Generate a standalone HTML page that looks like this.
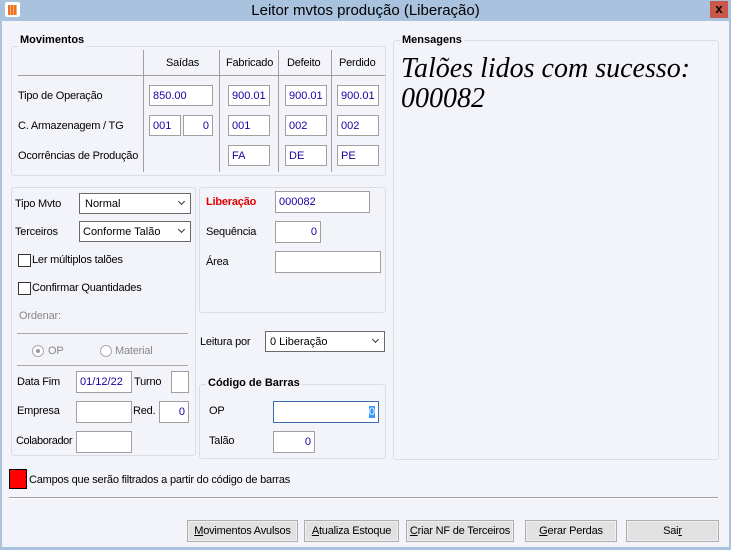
<!DOCTYPE html>
<html><head><meta charset="utf-8"><style>
*{box-sizing:border-box;margin:0;padding:0}
body{width:731px;height:550px;position:relative;overflow:hidden;background:#a9c2dd;font-family:"Liberation Sans",sans-serif;font-size:11px;color:#000}
.a{position:absolute}
#main{left:2px;top:21px;width:727px;height:526px;background:#f3f4f9}
.t{position:absolute;white-space:nowrap;font-size:11px;line-height:13px;letter-spacing:-0.2px}
.gb{position:absolute;border:1px solid #dcdde3;border-radius:3px}
.gl{position:absolute;background:#f3f4f9;font-weight:bold;font-size:11px;line-height:13px;padding:0 2px}
.in{position:absolute;background:#fff;border:1px solid #a0a0a0;color:#1a00a0;font-size:11px;padding:0 3px;white-space:nowrap;display:flex;align-items:center}
.r{justify-content:flex-end}
.vl{position:absolute;width:1px;background:#a0a0a0}
.hl{position:absolute;height:1px;background:#a0a0a0}
.sel{position:absolute;background:#fff;border:1px solid #6a6a6a;font-size:11px;padding:0 5px;display:flex;align-items:center}
.sel:after{content:"";position:absolute;right:6px;top:5px;width:4px;height:4px;border-right:1.5px solid #333;border-bottom:1.5px solid #333;transform:rotate(45deg)}
.cb{position:absolute;width:13px;height:13px;border:1px solid #333;background:#fff}
.btn{position:absolute;top:520px;height:22px;background:#e1e1e1;border:1px solid #adadad;box-shadow:inset 0 0 0 1px #f0f0f0;text-align:center;line-height:20px;font-size:11px;letter-spacing:-0.2px}
</style></head><body>
<div class="a" style="left:5px;top:2px;width:15px;height:15px;background:#fff;border-radius:2px"></div>
<div class="a" style="left:8px;top:5px;width:9px;height:10px;background:repeating-linear-gradient(90deg,#f07020 0 2px,#f8b080 2px 3px)"></div>
<div class="a" style="left:0;top:2px;width:731px;text-align:center;font-size:15px;line-height:17px">Leitor mvtos produção (Liberação)</div>
<div class="a" style="left:710px;top:1px;width:18px;height:17px;background:#c9574a;color:#000;font-weight:bold;text-align:center;font-size:13px;line-height:16px">x</div>
<div class="a" id="main"></div>

<div class="gb" style="left:11px;top:46px;width:375px;height:130px"></div>
<div class="gl" style="left:18px;top:34px">Movimentos</div>
<div class="vl" style="left:143px;top:50px;height:122px"></div>
<div class="vl" style="left:219px;top:50px;height:122px"></div>
<div class="vl" style="left:278px;top:50px;height:122px"></div>
<div class="vl" style="left:331px;top:50px;height:122px"></div>
<div class="hl" style="left:18px;top:75px;width:367px"></div>
<div class="t" style="left:166px;top:57px">Saídas</div>
<div class="t" style="left:226px;top:57px">Fabricado</div>
<div class="t" style="left:287px;top:57px">Defeito</div>
<div class="t" style="left:339px;top:57px">Perdido</div>
<div class="t" style="left:18px;top:90px">Tipo de Operação</div>
<div class="t" style="left:18px;top:120px">C. Armazenagem / TG</div>
<div class="t" style="left:18px;top:150px">Ocorrências de Produção</div>
<div class="in" style="left:149px;top:85px;width:64px;height:21px">850.00</div>
<div class="in" style="left:228px;top:85px;width:42px;height:21px">900.01</div>
<div class="in" style="left:285px;top:85px;width:42px;height:21px">900.01</div>
<div class="in" style="left:337px;top:85px;width:42px;height:21px">900.01</div>
<div class="in" style="left:149px;top:115px;width:32px;height:21px">001</div>
<div class="in r" style="left:183px;top:115px;width:30px;height:21px">0</div>
<div class="in" style="left:228px;top:115px;width:42px;height:21px">001</div>
<div class="in" style="left:285px;top:115px;width:42px;height:21px">002</div>
<div class="in" style="left:337px;top:115px;width:42px;height:21px">002</div>
<div class="in" style="left:228px;top:145px;width:42px;height:21px">FA</div>
<div class="in" style="left:285px;top:145px;width:42px;height:21px">DE</div>
<div class="in" style="left:337px;top:145px;width:42px;height:21px">PE</div>

<div class="gb" style="left:393px;top:40px;width:326px;height:420px"></div>
<div class="gl" style="left:400px;top:34px">Mensagens</div>
<div class="a" style="left:401px;top:54px;font-family:'Liberation Serif',serif;font-style:italic;font-size:28px;line-height:30px;white-space:nowrap">Talões lidos com sucesso:<br>000082</div>

<div class="gb" style="left:11px;top:187px;width:185px;height:269px"></div>
<div class="t" style="left:15px;top:198px">Tipo Mvto</div>
<div class="sel" style="left:79px;top:193px;width:112px;height:21px">Normal</div>
<div class="t" style="left:15px;top:226px">Terceiros</div>
<div class="sel" style="left:79px;top:221px;width:112px;height:21px;padding-left:3px">Conforme Talão</div>
<div class="cb" style="left:18px;top:254px"></div>
<div class="t" style="left:32px;top:254px">Ler múltiplos talões</div>
<div class="cb" style="left:18px;top:282px"></div>
<div class="t" style="left:32px;top:282px">Confirmar Quantidades</div>
<div class="t" style="left:19px;top:310px;color:#888">Ordenar:</div>
<div class="hl" style="left:17px;top:333px;width:171px;background:#a8a8a8"></div>
<div class="a" style="left:32px;top:345px;width:12px;height:12px;border:1px solid #aaa;border-radius:50%;background:#fff"></div>
<div class="a" style="left:36px;top:349px;width:4px;height:4px;border-radius:50%;background:#999"></div>
<div class="t" style="left:48px;top:345px;color:#888">OP</div>
<div class="a" style="left:100px;top:345px;width:12px;height:12px;border:1px solid #aaa;border-radius:50%;background:#fff"></div>
<div class="t" style="left:115px;top:345px;color:#888">Material</div>
<div class="hl" style="left:17px;top:365px;width:171px;background:#a8a8a8"></div>
<div class="t" style="left:17px;top:376px">Data Fim</div>
<div class="in" style="left:76px;top:371px;width:56px;height:22px">01/12/22</div>
<div class="t" style="left:134px;top:376px">Turno</div>
<div class="in" style="left:171px;top:371px;width:18px;height:22px"></div>
<div class="t" style="left:17px;top:405px">Empresa</div>
<div class="in" style="left:76px;top:401px;width:56px;height:22px"></div>
<div class="t" style="left:133px;top:405px">Red.</div>
<div class="in r" style="left:159px;top:401px;width:30px;height:22px">0</div>
<div class="t" style="left:16px;top:435px;letter-spacing:-0.4px">Colaborador</div>
<div class="in" style="left:76px;top:431px;width:56px;height:22px"></div>

<div class="gb" style="left:199px;top:187px;width:187px;height:126px"></div>
<div class="t" style="left:206px;top:196px;color:#e00000;font-weight:bold">Liberação</div>
<div class="in" style="left:275px;top:191px;width:95px;height:22px">000082</div>
<div class="t" style="left:206px;top:226px">Sequência</div>
<div class="in r" style="left:275px;top:221px;width:46px;height:22px">0</div>
<div class="t" style="left:206px;top:256px">Área</div>
<div class="in" style="left:275px;top:251px;width:106px;height:22px"></div>
<div class="t" style="left:200px;top:336px">Leitura por</div>
<div class="sel" style="left:265px;top:331px;width:120px;height:21px;padding-left:4px">0 Liberação</div>

<div class="gb" style="left:199px;top:384px;width:187px;height:75px"></div>
<div class="gl" style="left:206px;top:377px">Código de Barras</div>
<div class="t" style="left:209px;top:405px">OP</div>
<div class="in r" style="left:273px;top:401px;width:106px;height:22px;border-color:#3d6eaa"><span style="background:#3399ff;color:#fff">0</span></div>
<div class="t" style="left:209px;top:435px">Talão</div>
<div class="in r" style="left:273px;top:431px;width:42px;height:22px">0</div>

<div class="a" style="left:9px;top:469px;width:18px;height:20px;background:#f00;border:1px solid #000"></div>
<div class="t" style="left:29px;top:474px">Campos que serão filtrados a partir do código de barras</div>
<div class="hl" style="left:9px;top:497px;width:709px;background:#a0a0a0"></div>
<div class="a" style="left:9px;top:498px;width:709px;height:1px;background:#fff"></div>

<div class="btn" style="left:187px;width:111px"><u>M</u>ovimentos Avulsos</div>
<div class="btn" style="left:304px;width:95px"><u>A</u>tualiza Estoque</div>
<div class="btn" style="left:406px;width:108px"><u>C</u>riar NF de Terceiros</div>
<div class="btn" style="left:525px;width:92px"><u>G</u>erar Perdas</div>
<div class="btn" style="left:626px;width:93px">Sai<u>r</u></div>
</body></html>
